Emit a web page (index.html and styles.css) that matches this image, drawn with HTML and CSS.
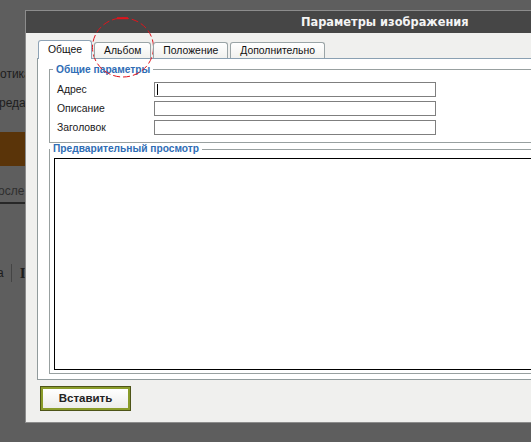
FILE: index.html
```html
<!DOCTYPE html>
<html lang="ru">
<head>
<meta charset="utf-8">
<title>Параметры изображения</title>
<link rel="stylesheet" href="styles.css">
</head>
<body>
<div class="bg">
  <div class="bg-text bg-t1">отика</div>
  <div class="bg-text bg-t2">редак</div>
  <div class="bg-bar"></div>
  <div class="bg-text bg-t3">осле</div>
  <div class="bg-rule"></div>
  <div class="bg-tools"><span class="bg-a">а</span><span class="bg-sep"></span><span class="bg-b">I</span></div>
</div>

<div class="dialog">
  <div class="dlg-head">Параметры изображения</div>
  <div class="dlg-body">
    <div class="tabs">
      <div class="tab active">Общее</div>
      <div class="tab">Альбом</div>
      <div class="tab">Положение</div>
      <div class="tab">Дополнительно</div>
    </div>
    <div class="panel">
      <fieldset class="fs fs-general">
        <legend>Общие параметры</legend>
        <div class="row"><label>Адрес</label><div class="inp"><span class="caret"></span></div></div>
        <div class="row"><label>Описание</label><div class="inp"></div></div>
        <div class="row"><label>Заголовок</label><div class="inp"></div></div>
      </fieldset>
      <fieldset class="fs fs-preview">
        <legend>Предварительный просмотр</legend>
        <div class="preview"></div>
      </fieldset>
    </div>
    <div class="actions">
      <div class="btn">Вставить</div>
    </div>
  </div>
</div>

<svg class="mark" width="66" height="64" viewBox="0 0 66 64">
  <ellipse cx="32" cy="31.5" rx="30.5" ry="29.5" fill="none" stroke="#e0141c" stroke-width="1" stroke-dasharray="7 3"/>
  <line x1="26" y1="2.2" x2="37" y2="2.2" stroke="#e0141c" stroke-width="2"/>
</svg>
</body>
</html>
```
FILE: styles.css
```css
html, body {
  margin: 0;
  padding: 0;
}
body {
  width: 531px;
  height: 442px;
  overflow: hidden;
  background: #5e5e5e;
  font-family: "Liberation Sans", Arial, sans-serif;
  font-size: 10.4px;
  position: relative;
}

/* page behind the dialog */
.bg {
  width: 40px;
  padding-top: 67px;
}
.bg-text {
  font-family: "Liberation Sans", Arial, sans-serif;
  font-size: 12px;
  color: #1d1d1d;
  line-height: 15px;
  white-space: nowrap;
}
.bg-t1 { margin-left: 0; }
.bg-t2 { margin-top: 14px; margin-left: -1px; }
.bg-bar {
  margin-top: 21px;
  height: 34px;
  background: #5a3409;
}
.bg-t3 {
  margin-top: 18px;
  margin-left: -2px;
  color: #2e2e2e;
}
.bg-rule {
  margin-top: 3px;
  height: 2px;
  background: #272727;
}
.bg-tools {
  margin-top: 60px;
  height: 18px;
  display: flex;
  align-items: center;
  color: #1d1d1d;
  font-size: 12px;
}
.bg-a { margin-left: -3px; }
.bg-sep {
  width: 1px;
  height: 18px;
  background: #444;
  margin-left: 7px;
}
.bg-b {
  margin-left: 8px;
  font-family: "Liberation Serif", serif;
  font-weight: bold;
  font-size: 15px;
}

/* dialog overlay */
.dialog {
  position: absolute;
  left: 25px;
  top: 10px;
  width: 740px;
  border: 1px solid #8c8c8c;
  border-right: none;
  background: #f0f0ee;
}
.dlg-head {
  height: 22px;
  line-height: 22px;
  background: #464646;
  color: #f4f4f4;
  font-family: "DejaVu Sans", Verdana, sans-serif;
  font-weight: bold;
  font-size: 11.4px;
  padding-left: 275px;
}
.dlg-body {
  height: 389px;
  padding: 8px 0 0 11px;
  box-sizing: border-box;
}

.tabs {
  display: flex;
  align-items: flex-end;
  gap: 2px;
  margin-left: 1px;
  height: 17px;
  position: relative;
  z-index: 1;
}
.tab {
  height: 15px;
  line-height: 15px;
  padding: 0 9px;
  border: 1px solid #9aa4a6;
  border-bottom: none;
  border-radius: 3px 3px 0 0;
  background: linear-gradient(#ffffff, #f1f1ee);
  color: #111;
}
.tab.active {
  height: 18px;
  line-height: 17px;
  background: #fff;
  border-color: #8ea3b6;
  margin-bottom: -1px;
}

.panel {
  background: #fff;
  border: 1px solid #919b9c;
  border-top-color: #8aa0b2;
  border-right: none;
  padding: 4px 0 5px 11px;
}

.fs {
  margin: 0;
  border: 1px solid #98a0a0;
  border-right: none;
  min-width: 0;
}
.fs legend {
  color: #2f6db5;
  font-weight: bold;
  font-size: 10.2px;
  padding: 0 3px;
  margin-left: -4px;
  line-height: 13px;
}
.fs-general {
  padding: 6px 0 7px 7px;
}
.row {
  display: flex;
  align-items: center;
  height: 15px;
  margin-bottom: 4px;
}
.row:last-child { margin-bottom: 0; }
.row label {
  width: 97px;
  color: #1a1a1a;
}
.inp {
  width: 280px;
  height: 13px;
  border: 1px solid #7f7f7f;
  background: #fff;
  position: relative;
}
.caret {
  position: absolute;
  left: 2px;
  top: 1px;
  width: 1px;
  height: 11px;
  background: #000;
}

.fs-preview {
  margin-top: 0;
  padding: 3px 0 3px 4px;
}
.fs-preview legend { line-height: 12px; }
.preview {
  height: 210px;
  border: 1px solid #000;
  border-right: none;
  background: #fff;
}

.actions {
  padding: 7px 0 0 3px;
}
.btn {
  width: 85px;
  height: 19px;
  line-height: 19px;
  text-align: center;
  font-weight: bold;
  font-size: 11.5px;
  color: #222;
  border: 2px solid #8a9c2a;
  box-shadow: 0 0 0 1px #4d5418;
  margin-left: 1px;
  background: linear-gradient(#ffffff, #ededea);
}

.mark {
  position: absolute;
  left: 91px;
  top: 16px;
}
```
